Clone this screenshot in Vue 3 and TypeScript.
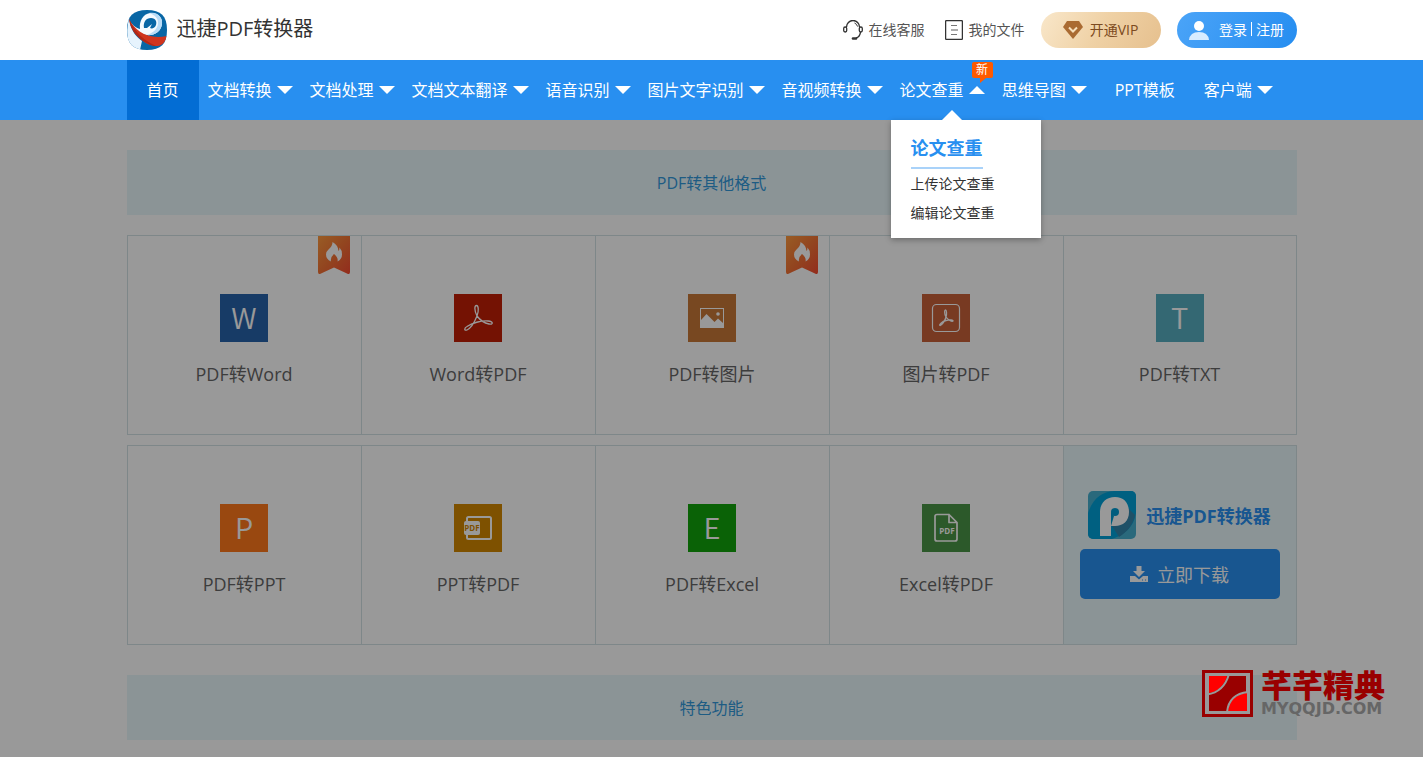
<script setup lang="ts">
interface NavItem {
  label: string
  arrow?: 'down' | 'up'
  active?: boolean
  badge?: string
  menu?: string[]
}

interface Tool {
  label: string
  icon: string
  letter?: string
  hot?: boolean
}

const nav: NavItem[] = [
  { label: '首页', active: true },
  { label: '文档转换', arrow: 'down' },
  { label: '文档处理', arrow: 'down' },
  { label: '文档文本翻译', arrow: 'down' },
  { label: '语音识别', arrow: 'down' },
  { label: '图片文字识别', arrow: 'down' },
  { label: '音视频转换', arrow: 'down' },
  { label: '论文查重', arrow: 'up', badge: '新', menu: ['上传论文查重', '编辑论文查重'] },
  { label: '思维导图', arrow: 'down' },
  { label: 'PPT模板' },
  { label: '客户端', arrow: 'down' },
]

const firstRow: Tool[] = [
  { label: 'PDF转Word', icon: 'word', letter: 'W', hot: true },
  { label: 'Word转PDF', icon: 'acrobat' },
  { label: 'PDF转图片', icon: 'image', hot: true },
  { label: '图片转PDF', icon: 'boxed' },
  { label: 'PDF转TXT', icon: 'txt', letter: 'T' },
]

const secondRow: Tool[] = [
  { label: 'PDF转PPT', icon: 'ppt', letter: 'P' },
  { label: 'PPT转PDF', icon: 'slides' },
  { label: 'PDF转Excel', icon: 'excel', letter: 'E' },
  { label: 'Excel转PDF', icon: 'sheet' },
]

const rows: Tool[][] = [firstRow, secondRow]
</script>

<template>
  <div class="page">
    <header class="header">
      <div class="wrap header-in">
        <a class="brand" href="#">
          <svg width="40" height="40" viewBox="0 0 40 40" aria-hidden="true">
            <defs>
              <clipPath id="logo-clip"><path d="M20 0C34 0 40 6 40 20S34 40 20 40 0 34 0 20 6 0 20 0Z" /></clipPath>
            </defs>
            <g clip-path="url(#logo-clip)">
              <rect width="40" height="40" fill="#0866a5" />
              <path d="M0 8C4 14 9 18 13 19C12 11 16 4 23 3C31 2 36 8 35 14C34 22 27 26 19 25C10 24 4 17 0 8Z" fill="#f4faff" />
              <path d="M22 3C31 1 36 8 35 14C34 22 27 26 19 25C25 24 31 19 31 13C31 8 28 5 22 3Z" fill="#b9dcf7" />
              <path d="M17 18C16 12 19 8 24 8C29 8 30 12 29 15C28 18 25 19 23 18L25 14L20 18Z" fill="#0866a5" />
              <path d="M2 9C4 22 10 27 15 31L13 40H3C0 32 -1 20 2 9Z" fill="#e6f3fd" />
              <path d="M2 9C8 21 21 30 40 26C39 31 36 35 31 36C20 37 7 27 2 9Z" fill="#d0351e" />
              <path d="M2 9C3 19 9 26 16 31C21 34 25 36 29 36C18 31 9 24 2 9Z" fill="#b12817" />
            </g>
          </svg>
          <span>迅捷PDF转换器</span>
        </a>
        <div class="actions">
          <a class="link" href="#">
            <svg width="20" height="20" viewBox="0 0 20 20" fill="none" stroke="#333" aria-hidden="true">
              <path d="M3.500 7A6.500 6.500 0 0 1 16.500 7M17.500 12Q17 17 13 18" stroke-width="1.400" />
              <rect x=".7" y="7" width="3" height="5" rx="1.400" stroke-width="1.300" />
              <rect x="16.300" y="7" width="3" height="5" rx="1.400" stroke-width="1.300" />
              <path d="M10 18.500H13" stroke-width="2.600" stroke-linecap="round" />
              <path d="M11.500 3Q14 4 14.500 6.500" />
            </svg>
            <span>在线客服</span>
          </a>
          <a class="link" href="#">
            <svg width="18" height="20" viewBox="0 0 18 20" fill="none" aria-hidden="true">
              <rect x=".6" y=".6" width="16.800" height="18.800" rx="1" stroke="#333" stroke-width="1.300" />
              <path d="M6 5.500H12M6 14.500H12" stroke="#777" stroke-width="1.200" />
              <path d="M6 10H13" stroke="#777" stroke-width="1.200" />
            </svg>
            <span>我的文件</span>
          </a>
          <button class="pill vip" type="button">
            <svg width="20" height="18" viewBox="0 0 20 18" aria-hidden="true">
              <path d="M4 0H16L20 6L10 18L0 6Z" fill="#aa6b32" />
              <path d="M6 6.500L10 10.500L14 6.500" fill="none" stroke="#f6dfbb" stroke-width="2" />
            </svg>
            <span>开通VIP</span>
          </button>
          <button class="pill login" type="button">
            <svg width="20" height="19" viewBox="0 0 20 19" aria-hidden="true">
              <circle cx="10" cy="5" r="5" fill="#fff" />
              <path d="M0 19Q1 11 10 11T20 19Z" fill="#d9ecff" />
            </svg>
            <span class="auth"><span>登录</span><span class="bar"></span><span>注册</span></span>
          </button>
        </div>
      </div>
    </header>

    <nav class="nav">
      <ul class="wrap nav-list">
        <li v-for="item in nav" :key="item.label" class="nav-item" :class="{ active: item.active, plain: !item.arrow }">
          <a href="#">
            <span class="nav-label">{{ item.label }}</span>
            <svg v-if="item.arrow" class="caret" width="16" height="8" viewBox="0 0 16 8" aria-hidden="true">
              <path :d="item.arrow === 'down' ? 'M0 0H16L8 8Z' : 'M0 8H16L8 0Z'" fill="#fff" />
            </svg>
          </a>
          <span v-if="item.badge" class="badge">{{ item.badge }}</span>
          <div v-if="item.menu" class="menu">
            <strong>{{ item.label }}</strong>
            <a v-for="entry in item.menu" :key="entry" href="#">{{ entry }}</a>
          </div>
        </li>
      </ul>
    </nav>

    <main class="wrap main">
      <h2 class="banner">PDF转其他格式</h2>
      <div v-for="(row, index) in rows" :key="index" class="row">
        <a v-for="tool in row" :key="tool.label" class="card" href="#">
          <svg v-if="tool.hot" class="hot" width="32" height="38" viewBox="0 0 32 38" aria-hidden="true">
            <defs>
              <linearGradient :id="'hot-' + tool.icon" x1="0" y1="0" x2="1" y2="1">
                <stop offset="0" stop-color="#ff9a3e" />
                <stop offset=".5" stop-color="#f47435" />
                <stop offset="1" stop-color="#f54a30" />
              </linearGradient>
            </defs>
            <path d="M0 0H32V36Q32 39 29 37.500L16 31.500L3 37.500Q0 39 0 36Z" :fill="'url(#hot-' + tool.icon + ')'" />
            <path d="M14.500 6Q20 9 20.500 15Q21.500 14 21.500 11.500Q24 14 24 18.500Q24 23 19.500 25.500Q20.500 21.500 16 18Q12 21.500 13 25.500Q8 23 8 18.500Q8 15.500 10.500 13.500Q14.500 10 14.500 6Z" fill="#fff" />
          </svg>
          <span class="icon" :class="tool.icon">
            <span v-if="tool.letter" class="letter">{{ tool.letter }}</span>
            <svg v-else width="48" height="48" viewBox="0 0 48 48" fill="none" stroke="#fff" aria-hidden="true">
              <template v-if="tool.icon === 'acrobat'">
                <path d="M23 22C20 16 20.500 11.500 22.500 11.500S25 17 23 22C21 27 17 34 13 36C10 37 10 34 13 32.500C18 29 27 26.500 34 27C40 27.500 39 31 35 30C30 29 26 26 23 22Z" stroke-width="1.300" />
              </template>
              <template v-else-if="tool.icon === 'image'">
                <rect x="12.500" y="14.500" width="23" height="19" />
                <path d="M13 26L18.500 20L26.500 28L30 24.500L35 29V33H13Z" fill="#fff" stroke="none" />
                <circle cx="30" cy="20" r="1.800" fill="#fff" stroke="none" />
              </template>
              <template v-else-if="tool.icon === 'boxed'">
                <rect x="10.500" y="10.500" width="27" height="27" rx="4" stroke-width="1.200" />
                <path d="M24 23C22 19 22.500 16 23.500 16S25 20 24 23C23 27 20 31 18 31.500C16.500 31 20 27.500 24 26.500C28 25.500 31.500 26 31 27C30 28 26 26 24 23Z" stroke-width="1.300" />
              </template>
              <template v-else-if="tool.icon === 'slides'">
                <rect x="13" y="13" width="24" height="22" rx="1.500" stroke-width="2" />
                <rect x="10" y="17" width="16" height="14" rx="2" fill="#fff" stroke="none" />
                <text class="tiny slides-text" x="18" y="27" text-anchor="middle">PDF</text>
              </template>
              <template v-else>
                <path d="M27 10.500H15Q13 10.500 13 12.500V35Q13 37 15 37H33Q35 37 35 35V18.500L27 10.500V18.500H35" stroke-width="1.700" stroke-linejoin="round" />
                <text class="tiny sheet-text" x="25" y="30" text-anchor="middle">PDF</text>
              </template>
            </svg>
          </span>
          <span class="card-label">{{ tool.label }}</span>
        </a>
        <div v-if="index === 1" class="card promo">
          <div class="promo-brand">
            <svg width="48" height="48" viewBox="0 0 48 48" aria-hidden="true">
              <defs><clipPath id="promo-clip"><rect width="48" height="48" rx="5" /></clipPath></defs>
              <g clip-path="url(#promo-clip)">
                <rect width="48" height="48" fill="#47b0cf" />
                <path d="M0 22C5 7 14 1 26 0H48V22C46 36 36 44 24 48H0Z" fill="#00a0d8" />
                <path d="M24 35L40 17L47 24C45 34 39 41 31 46Z" fill="#3385ac" />
                <path d="M12 45V21C12 12 18 6 27 6S41 12 41 21S35 35 27 35H23V45Z" fill="#fff" />
                <circle cx="27" cy="21" r="4" fill="#009bd2" />
                <path d="M23 21V35L26 25Z" fill="#009bd2" />
              </g>
            </svg>
            <strong>迅捷PDF转换器</strong>
          </div>
          <button class="download" type="button">
            <svg width="18" height="16" viewBox="0 0 18 16" aria-hidden="true">
              <path d="M6.500 0H11.500V5H15L9 11L3 5H6.500Z" fill="#fff" />
              <path d="M0 10H5L9 13.500L13 10H18V16H0Z" fill="#fff" />
              <path d="M12 14H13M15 14H16" stroke="#288ff0" />
            </svg>
            <span>立即下载</span>
          </button>
        </div>
      </div>
      <h2 class="banner second">特色功能</h2>
    </main>

    <div class="mask"></div>

    <div class="watermark">
      <svg width="51" height="47" viewBox="0 0 51 47" aria-hidden="true">
        <rect x="1.500" y="1.500" width="48" height="44" fill="#999" stroke="#900" stroke-width="3" />
        <rect x="7" y="6" width="37" height="35" fill="#900" />
        <path d="M7 6H25Q20 21 7 23Z" fill="#f00" />
        <path d="M26 41Q28 25 45 23V41Z" fill="#f00" />
        <path d="M27 4Q22 22 5 24.500M25 42Q27 24 46 22" fill="none" stroke="#999" stroke-width="2" />
      </svg>
      <div class="mark-text">
        <span class="mark-name">芊芊精典</span>
        <span class="mark-site">MYQQJD.COM</span>
      </div>
    </div>
  </div>
</template>

<style>
body {
  margin: 0;
  background: #fff;
}
</style>

<style scoped>
.page {
  position: relative;
  min-height: 100vh;
  font-family: "Open Sans", "Noto Sans CJK SC", sans-serif;
  font-size: 14px;
  color: #333;
  overflow: hidden;
}
a {
  color: inherit;
  text-decoration: none;
}
button {
  border: 0;
  font: inherit;
  cursor: pointer;
}
svg {
  display: block;
  flex: none;
}
.wrap {
  max-width: 1170px;
  margin: 0 auto;
}
.header {
  position: relative;
  z-index: 2;
  background: #fff;
}
.header-in {
  display: flex;
  align-items: center;
  justify-content: space-between;
  height: 60px;
}
.brand {
  display: flex;
  align-items: center;
  gap: 10px;
  font-size: 20px;
  line-height: 36px;
}
.brand span {
  padding-bottom: 2px;
}
.actions {
  display: flex;
  align-items: center;
  gap: 16px;
}
.link {
  display: flex;
  align-items: center;
  gap: 6px;
  color: #555;
}
.link span,
.pill > span,
.nav-label {
  padding-bottom: 2px;
}
.link + .link {
  margin-left: 4px;
}
.pill {
  display: flex;
  align-items: center;
  justify-content: center;
  gap: 7px;
  width: 120px;
  height: 36px;
  padding: 0;
  border-radius: 18px;
}
.vip {
  color: #7c4a20;
  background: linear-gradient(120deg, #f9e7ca, #efd1a5 50%, #e6c08e);
}
.login {
  gap: 10px;
  color: #fff;
  background: linear-gradient(120deg, #4ba4f8, #258df0);
}
.auth {
  display: flex;
  align-items: center;
  gap: 4px;
}
.bar {
  width: 1px;
  height: 14px;
  background: #fff;
}
.nav {
  position: relative;
  z-index: 3;
  background: #288ff0;
  color: #fff;
  font-size: 16px;
}
.nav-list {
  display: flex;
  padding: 0;
  list-style: none;
}
.nav-item {
  position: relative;
  white-space: nowrap;
}
.nav-item > a {
  display: flex;
  align-items: center;
  gap: 5px;
  height: 60px;
  padding: 0 8px 0 9px;
}
.plain > a {
  padding: 0 20px;
}
.active {
  background: #036dd4;
}
.badge {
  position: absolute;
  top: 2px;
  right: 0;
  width: 21px;
  border-radius: 2px;
  background: #ff5a00;
  font-size: 12px;
  line-height: 16px;
  text-align: center;
}
.badge::after {
  content: "";
  position: absolute;
  top: 16px;
  left: 8px;
  border-top: 5px solid #ff5a00;
  border-right: 6px solid transparent;
}
.menu {
  position: absolute;
  top: 60px;
  left: 0;
  display: flex;
  flex-direction: column;
  align-items: flex-start;
  box-sizing: border-box;
  width: 150px;
  padding: 10px 20px 11px;
  background: #fff;
  box-shadow: 0 2px 6px rgba(0, 0, 0, 0.3);
  color: #333;
  font-size: 14px;
  line-height: 29px;
}
.menu::before {
  content: "";
  position: absolute;
  top: -10px;
  left: 51px;
  border: 10px solid transparent;
  border-top: 0;
  border-bottom-color: #fff;
}
.menu strong {
  border-bottom: 2px solid #a9d2f9;
  color: #288ff0;
  font-size: 18px;
  line-height: 37px;
}
.main {
  padding: 30px 0 16px;
}
.banner {
  margin: 0 0 20px;
  padding-top: 2px;
  background: #e8f7fb;
  color: #3399db;
  font-size: 16px;
  font-weight: 400;
  line-height: 63px;
  text-align: center;
}
.second {
  margin: 30px 0 0;
}
.row {
  display: grid;
  grid-template-columns: repeat(5, 1fr);
  box-sizing: border-box;
  height: 200px;
  border: solid #d2e2e4;
  border-width: 1px 0;
}
.row + .row {
  margin-top: 10px;
}
.card {
  position: relative;
  display: flex;
  flex-direction: column;
  align-items: center;
  padding-top: 58px;
  border-left: 1px solid #d2e2e4;
  color: #666;
}
.card:last-child {
  border-right: 1px solid #d2e2e4;
}
.hot {
  position: absolute;
  top: 0;
  right: 11px;
}
.icon {
  display: flex;
  align-items: center;
  justify-content: center;
  width: 48px;
  height: 48px;
  color: #fff;
}
.letter {
  padding-bottom: 4px;
  font-family: "Noto Sans CJK SC", sans-serif;
  font-size: 29px;
  font-weight: 350;
  line-height: 44px;
}
.icon.word { background: #2763aa; }
.icon.acrobat { background: #c21e05; }
.icon.image { background: #c97938; }
.icon.boxed { background: #c96139; }
.icon.txt { background: #57adc0; }
.icon.ppt { background: #ff781c; }
.icon.slides { background: #d38700; }
.icon.excel { background: #12a30b; }
.icon.sheet { background: #4a9446; }
.tiny {
  stroke: none;
  font-family: "Open Sans", sans-serif;
  font-size: 8px;
  font-weight: 700;
}
.slides-text {
  fill: #d38700;
}
.sheet-text {
  fill: #fff;
}
.card-label {
  margin-top: 20px;
  font-size: 18px;
  line-height: 24px;
}
.promo {
  gap: 10px;
  padding-top: 45px;
  background: #e8f7fb;
}
.promo-brand {
  display: flex;
  align-items: center;
  gap: 10px;
  color: #288ff0;
  font-size: 18px;
}
.download {
  display: flex;
  align-items: center;
  justify-content: center;
  gap: 9px;
  width: 200px;
  height: 50px;
  border-radius: 5px;
  background: #288ff0;
  color: #fff;
  font-size: 18px;
}
.mask {
  position: absolute;
  inset: 0;
  z-index: 1;
  background: rgba(0, 0, 0, 0.4);
}
.watermark {
  position: absolute;
  right: 38px;
  bottom: 37px;
  z-index: 4;
  display: flex;
  gap: 8px;
}
.mark-text {
  display: flex;
  flex-direction: column;
}
.mark-name {
  color: #900;
  font-family: "Noto Sans CJK SC", sans-serif;
  font-size: 31px;
  font-weight: 900;
  line-height: 27px;
}
.mark-site {
  color: #666;
  font-family: "DejaVu Sans", sans-serif;
  font-size: 16px;
  font-weight: 700;
  line-height: 23px;
}
</style>
